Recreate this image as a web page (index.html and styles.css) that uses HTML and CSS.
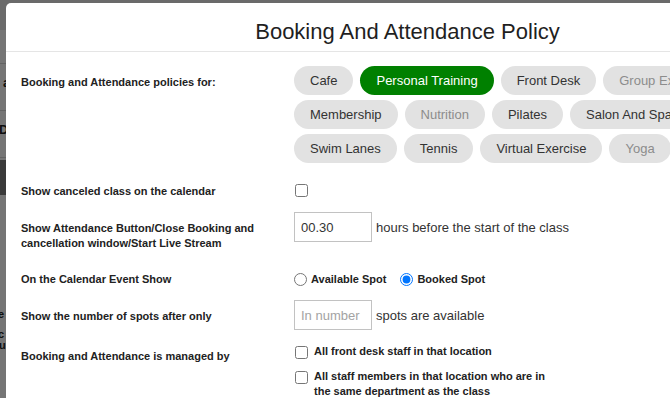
FILE: index.html
```html
<!DOCTYPE html>
<html lang="en">
<head>
    <meta charset="UTF-8">
    <meta name="viewport" content="width=device-width, initial-scale=1.0">
    <title>Booking And Attendance Policy</title>
    <link rel="stylesheet" href="styles.css">
</head>
<body>
    <!-- page behind the modal -->
    <div class="page">
        <div class="page-top"></div>
        <div class="page-row page-row--tall"></div>
        <div class="page-row page-row--line"><span class="frag frag-a">a</span></div>
        <div class="page-row page-row--line"><span class="frag">De</span></div>
        <div class="page-bar"></div>
        <div class="page-list">
            <span class="frag frag-e">e</span>
            <span class="frag frag-c">c</span>
            <span class="frag frag-ur">ur</span>
        </div>
    </div>
    <div class="backdrop"></div>

    <div class="modal">
        <div class="modal-header">Booking And Attendance Policy</div>

        <div class="modal-body">
            <div class="field">
                <div class="field-label label-pills">Booking and Attendance policies for:</div>
                <div class="pill-list">
                    <span class="pill">Cafe</span>
                    <span class="pill active">Personal Training</span>
                    <span class="pill">Front Desk</span>
                    <span class="pill muted">Group Exercise</span>
                    <span class="pill">Membership</span>
                    <span class="pill muted">Nutrition</span>
                    <span class="pill">Pilates</span>
                    <span class="pill">Salon And Spa</span>
                    <span class="pill">Swim Lanes</span>
                    <span class="pill">Tennis</span>
                    <span class="pill">Virtual Exercise</span>
                    <span class="pill muted">Yoga</span>
                </div>
            </div>

            <div class="field field-check">
                <div class="field-label">Show canceled class on the calendar</div>
                <div class="field-control">
                    <input type="checkbox" class="check">
                </div>
            </div>

            <div class="field field-input">
                <div class="field-label label-input">Show Attendance Button/Close Booking and cancellation window/Start Live Stream</div>
                <div class="field-control">
                    <input type="text" class="text-input" value="00.30">
                    <span class="hint">hours before the start of the class</span>
                </div>
            </div>

            <div class="field field-radio">
                <div class="field-label label-radio">On the Calendar Event Show</div>
                <div class="field-control">
                    <label class="radio-item"><input type="radio" name="show" class="radio"> Available Spot</label>
                    <label class="radio-item"><input type="radio" name="show" class="radio" checked> Booked Spot</label>
                </div>
            </div>

            <div class="field field-input">
                <div class="field-label label-input">Show the number of spots after only</div>
                <div class="field-control">
                    <input type="text" class="text-input" placeholder="In number">
                    <span class="hint">spots are available</span>
                </div>
            </div>

            <div class="field field-options">
                <div class="field-label label-options">Booking and Attendance is managed by</div>
                <div class="option-list">
                    <label class="option"><input type="checkbox" class="check"><span>All front desk staff in that location</span></label>
                    <label class="option"><input type="checkbox" class="check"><span>All staff members in that location who are in the same department as the class</span></label>
                </div>
            </div>
        </div>
    </div>
</body>
</html>
```

FILE: styles.css
```css
body {
    margin: 0;
    overflow: hidden;
    font-family: "Liberation Sans", Arial, sans-serif;
    background: #fff;
}

/* page behind the overlay */
.page {
    height: 398px;
    background: #fff;
    font-size: 13px;
    font-weight: bold;
    color: #222;
}

.page-top {
    height: 30px;
    background: #e6e6e6;
}

.page-row {
    height: 33px;
    border-bottom: 1px solid #d8d8d8;
}

.page-row--line {
    height: 46px;
    line-height: 38px;
}

.page-row:last-of-type {
    height: 39px;
}

.page-bar {
    height: 35px;
    margin-top: 2px;
    background: #7e7e7e;
}

.page-list {
    display: flex;
    flex-direction: column;
    padding-top: 114px;
    font-size: 11px;
    line-height: 11px;
}

.frag {
    margin-left: -1px;
}

.frag-a {
    margin-left: 3px;
}

.frag-e,
.frag-c {
    margin-left: -2px;
}

.frag-c {
    margin-top: 9px;
}

.backdrop {
    position: fixed;
    inset: 0;
    background: rgba(0, 0, 0, 0.54);
}

/* modal */
.modal {
    position: absolute;
    top: 3px;
    left: 6px;
    width: 803px;
    height: 440px;
    background: #fff;
    border-radius: 5px 5px 0 0;
}

.modal-header {
    box-sizing: border-box;
    height: 49px;
    padding-top: 16px;
    border-bottom: 1px solid #e5e5e5;
    text-align: center;
    font-size: 22px;
    line-height: 26px;
    color: #1f1f1f;
}

.modal-body {
    padding: 14px 15px 0;
}

.field {
    display: flex;
    align-items: flex-start;
}

.field-label {
    flex: none;
    width: 273px;
    padding-top: 2px;
    font-size: 11px;
    font-weight: bold;
    line-height: 15px;
    color: #222;
}

.field-control {
    display: flex;
    align-items: center;
    min-height: 15px;
}

.label-pills,
.label-input {
    padding-top: 9px;
}

.label-radio {
    padding-top: 0;
}

.label-options {
    padding-top: 5px;
}

.field-check {
    margin-top: 19px;
}

.field-input {
    margin-top: 13px;
}

.field-radio {
    margin-top: 21px;
}

.field-options {
    margin-top: 14px;
}

/* pills */
.pill-list {
    display: flex;
    flex-wrap: wrap;
    gap: 5px 7px;
    width: 460px;
}

.pill {
    height: 29px;
    padding: 0 16px;
    border-radius: 15px;
    background: #e2e2e2;
    color: #333;
    font-size: 13px;
    line-height: 29px;
    white-space: nowrap;
}

.pill.active {
    background: #008000;
    color: #fff;
}

.pill.muted {
    color: #8c8c8c;
}

/* inputs */
.check {
    width: 13px;
    height: 13px;
    margin: 1px 0 0 1px;
}

.text-input {
    box-sizing: border-box;
    width: 78px;
    height: 30px;
    margin: 0;
    padding: 0 6px;
    border: 1px solid #c2c2c2;
    border-radius: 0;
    font-family: inherit;
    font-size: 13px;
    color: #333;
}

.text-input::placeholder {
    color: #a3a3a3;
}

.hint {
    margin-left: 4px;
    font-size: 13px;
    color: #333;
}

.radio-item {
    display: flex;
    align-items: center;
    gap: 4px;
    margin-right: 14px;
    font-size: 11px;
    font-weight: bold;
    line-height: 15px;
    color: #222;
}

.radio {
    width: 13px;
    height: 13px;
    margin: 0;
}

.option-list {
    display: flex;
    flex-direction: column;
    gap: 10px;
}

.option {
    display: flex;
    align-items: flex-start;
    gap: 6px;
    font-size: 11px;
    font-weight: bold;
    line-height: 15px;
    color: #222;
}

.option .check {
    flex: none;
    margin-top: 2px;
}

.option span {
    width: 245px;
}
```
